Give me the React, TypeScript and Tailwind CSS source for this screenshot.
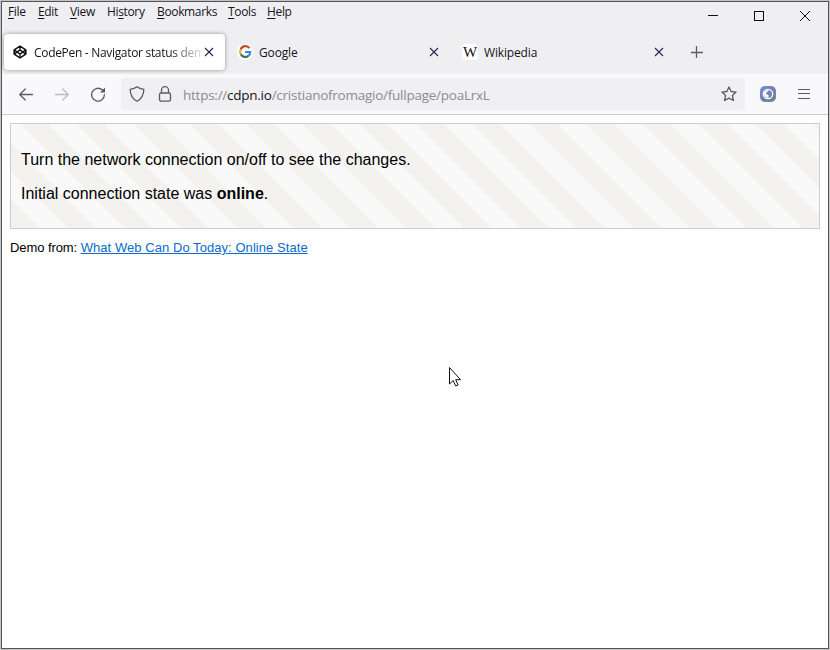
import type { ReactNode } from "react";

const menu = [
  { before: "", key: "F", after: "ile", w: "w-[30px]" },
  { before: "", key: "E", after: "dit", w: "w-[32px]" },
  { before: "", key: "V", after: "iew", w: "w-[37px]" },
  { before: "Hi", key: "s", after: "tory", w: "w-[50px]" },
  { before: "", key: "B", after: "ookmarks", w: "w-[71px]" },
  { before: "", key: "T", after: "ools", w: "w-[39px]" },
  { before: "", key: "H", after: "elp", w: "w-[40px]" },
];

function CloseIcon() {
  return (
    <svg className="size-[10px] shrink-0" viewBox="0 0 10 10" fill="none" stroke="#2b2350" strokeWidth="1.1">
      <path d="M1 1l8 8M9 1L1 9" />
    </svg>
  );
}

function Tab({ icon, title, width }: { icon: ReactNode; title: string; width: string }) {
  return (
    <div className={`flex h-[36px] items-center pl-[8px] ${width}`}>
      <div className="flex size-4 shrink-0 items-center justify-center">{icon}</div>
      <span className="ml-[6px] flex-1 whitespace-nowrap pt-[2px] tracking-[-0.15px]">{title}</span>
      <CloseIcon />
    </div>
  );
}

function CodePenIcon() {
  return (
    <svg className="size-4 shrink-0" viewBox="0 0 16 16" fill="none" stroke="#111" strokeWidth="1.6" strokeLinejoin="round">
      <path d="M8 2.2l5.8 3.7v4.2L8 13.8l-5.8-3.7V5.9z" />
      <path d="M8 2.2v3.6M8 10.2v3.6M2.2 5.9L8 10.1l5.8-4.2M2.2 10.1L8 5.900l5.8 4.2" strokeWidth="1.3" />
    </svg>
  );
}

function GoogleIcon() {
  return (
    <svg className="size-4 rounded-full bg-white" viewBox="0 0 16 16" fill="none" strokeWidth="2.2">
      <path d="M12.5 4.1A5 5 0 0 0 3.7 5.6" stroke="#b9542f" />
      <path d="M3.7 5.6a5 5 0 0 0 .1 4.6" stroke="#eda73c" />
      <path d="M3.8 10.2a5 5 0 0 0 7.6 1.6" stroke="#476b59" />
      <path d="M8 8h5.2a5 5 0 0 1-1.8 3.8" stroke="#358be8" />
    </svg>
  );
}

function WikipediaIcon() {
  return (
    <div className="flex size-4 items-center justify-center rounded-[3px] bg-white font-['Liberation_Serif',serif] text-[15px] leading-4 text-[#111]">
      W
    </div>
  );
}

function WindowControls() {
  return (
    <div className="flex h-[28px] items-center gap-[36px] pr-[18px]">
      <svg className="size-[10px]" viewBox="0 0 10 10" stroke="#111" shapeRendering="crispEdges">
        <path d="M0 4.5h10" />
      </svg>
      <svg className="size-[10px]" viewBox="0 0 10 10" fill="none" stroke="#111" shapeRendering="crispEdges">
        <path d="M.5 .5h9v9h-9z" />
      </svg>
      <svg className="size-[10px]" viewBox="0 0 10 10" stroke="#111">
        <path d="M0 0l10 10M10 0L0 10" />
      </svg>
    </div>
  );
}

export default function App() {
  return (
    <div className="h-[650px] w-[830px] overflow-hidden bg-[#c4c4c4] p-px font-['Open_Sans','Noto_Sans',sans-serif] text-[12px] text-[#15141a]">
      <div className="relative flex h-[648px] w-[828px] flex-col border border-[#555] bg-[#fefefe]">
        <header className="h-[72px] shrink-0 bg-[#efeff2]">
          <div className="flex h-[29px] justify-between">
            <nav className="flex h-[19px] items-center pl-[6px]">
              {menu.map((m) => (
                <span key={m.key + m.after} className={`whitespace-nowrap leading-4 tracking-[-0.35px] ${m.w}`}>
                  {m.before}
                  <span className="underline underline-offset-2">{m.key}</span>
                  {m.after}
                </span>
              ))}
            </nav>
            <WindowControls />
          </div>
          <div className="flex pl-[2px] pt-[3px]">
            <div className="flex h-[36px] w-[221px] items-center rounded-[4px] bg-white pl-[8px] pr-[11px] shadow-[0_0_4px_rgba(0,0,0,0.4)]">
              <CodePenIcon />
              <span className="ml-[6px] w-[168px] shrink-0 overflow-hidden whitespace-nowrap pt-[2px] tracking-[-0.31px] [mask-image:linear-gradient(to_right,black_135px,transparent_172px)]">
                CodePen - Navigator status demo
              </span>
              <span className="ml-[2px] flex">
                <CloseIcon />
              </span>
            </div>
            <div className="ml-[4px] flex items-center">
              <Tab icon={<GoogleIcon />} title="Google" width="w-[210px]" />
              <div className="ml-[15px]">
                <Tab icon={<WikipediaIcon />} title="Wikipedia" width="w-[210px]" />
              </div>
              <svg className="ml-[27px] size-[12px]" viewBox="0 0 12 12" stroke="#5b5b66" strokeWidth="1.3">
                <path d="M5.500 0v12M0 6.500h12" />
              </svg>
            </div>
          </div>
        </header>

        <div className="flex h-[41px] shrink-0 items-center border-b border-[#ccc] bg-[#f9f9fb] pl-[16px]">
          <svg className="size-4" viewBox="0 0 16 16" fill="none" stroke="#5b5b66" strokeWidth="1.3" strokeLinecap="round" strokeLinejoin="round">
            <path d="M14.500 8.500H1.800M7.300 3L1.700 8.500l5.600 5.500" />
          </svg>
          <svg className="ml-[20px] size-4" viewBox="0 0 16 16" fill="none" stroke="#bdbdc1" strokeWidth="1.3" strokeLinecap="round" strokeLinejoin="round">
            <path d="M1.500 8.500h12.700M8.700 3l5.600 5.500L8.700 14" />
          </svg>
          <svg className="ml-[20px] size-4" viewBox="0 0 16 16" fill="none" stroke="#5b5b66" strokeWidth="1.3" strokeLinecap="round">
            <path d="M12.4 4A6.400 6.400 0 1 0 14.400 8.600" />
            <path d="M15 1.500v5h-5z" fill="#5b5b66" stroke="none" />
          </svg>
          <div className="ml-[15px] flex h-[32px] w-[624px] items-center rounded-[4px] bg-[#f0f0f2] pl-[8px] pr-[8px]">
            <svg className="size-4" viewBox="0 0 16 16" fill="none" stroke="#5b5b66" strokeWidth="1.3" strokeLinejoin="round">
              <path d="M8 .8C6.200 2.200 4 2.900 1.200 3.300c0 5.200 1.500 9.200 6.800 12 5.300-2.800 6.800-6.800 6.800-12C12 2.900 9.800 2.200 8 .8z" />
            </svg>
            <svg className="ml-[12px] size-4" viewBox="0 0 16 16" fill="none" stroke="#5b5b66" strokeWidth="1.3">
              <rect x="2.500" y="7" width="11" height="8.200" rx="1.600" />
              <path d="M4.500 7V4.200a3.500 3.500 0 0 1 7 0V7" />
            </svg>
            <span className="ml-[10px] flex-1 whitespace-nowrap pt-[2px] text-[13.5px] leading-5 tracking-[-0.25px] text-[#8b8b92]">
              https://<span className="text-[#15141a]">cdpn.io</span>/cristianofromagio/fullpage/poaLrxL
            </span>
            <svg className="size-4" viewBox="0 0 16 16" fill="none" stroke="#5b5b66" strokeWidth="1.3" strokeLinejoin="round">
              <path d="M8 1l2.100 4.500 5 .6-3.700 3.400 1 5L8 12.100l-4.400 2.400 1-5L.9 6.100l5-.6z" />
            </svg>
          </div>
          <svg className="ml-[15px] size-4" viewBox="0 0 16 16" fill="none">
            <defs>
              <linearGradient id="globe" x1="0" y1="0" x2="1" y2="1">
                <stop offset="0" stopColor="#6f8fe4" />
                <stop offset="0.5" stopColor="#7480b5" />
                <stop offset="1" stopColor="#75877b" />
              </linearGradient>
            </defs>
            <rect width="16" height="16" rx="5" fill="url(#globe)" />
            <circle cx="8" cy="8" r="4.700" stroke="#fff" strokeWidth="1.300" />
            <path d="M3.800 6l3.200-2 2 .5-2.500 2L6 8l2.500 1v3L6 11.500 4 9z" fill="#fff" />
          </svg>
          <svg className="ml-[22px] h-[12px] w-[12px]" viewBox="0 0 12 12" stroke="#5b5b66" shapeRendering="crispEdges">
            <path d="M0 1.500h12M0 5.500h12M0 10.500h12" />
          </svg>
        </div>

        <main className="px-[8px] pt-[8px] font-['Liberation_Sans',Arial,sans-serif] text-black">
          <section className="h-[106px] border border-[#ccc] bg-[repeating-linear-gradient(45deg,#f3f2ee_0,#f3f2ee_20px,#f9f9f9_20px,#f9f9f9_40px)] px-[10px] pt-[27px] text-[16px] leading-[18px]">
            <p>Turn the network connection on/off to see the changes.</p>
            <p className="mt-[16px]">
              Initial connection state was <b>online</b>.
            </p>
          </section>
          <p className="mt-[11px] text-[13px] leading-[15px]">
            <span className="tracking-[-0.08px]">Demo from: </span>
            <a className="tracking-[0.06px] text-[#0b6bcf] underline">What Web Can Do Today: Online State</a>
          </p>
        </main>

        <svg className="absolute left-[446px] top-[364px] h-[22px] w-[14px]" viewBox="0 0 14 22" fill="#fff" stroke="#111">
          <path d="M1.500 1.500v16.500l3.700-3.500 2.400 5.500 2.500-1-2.400-5.300h4.800z" />
        </svg>
      </div>
    </div>
  );
}
